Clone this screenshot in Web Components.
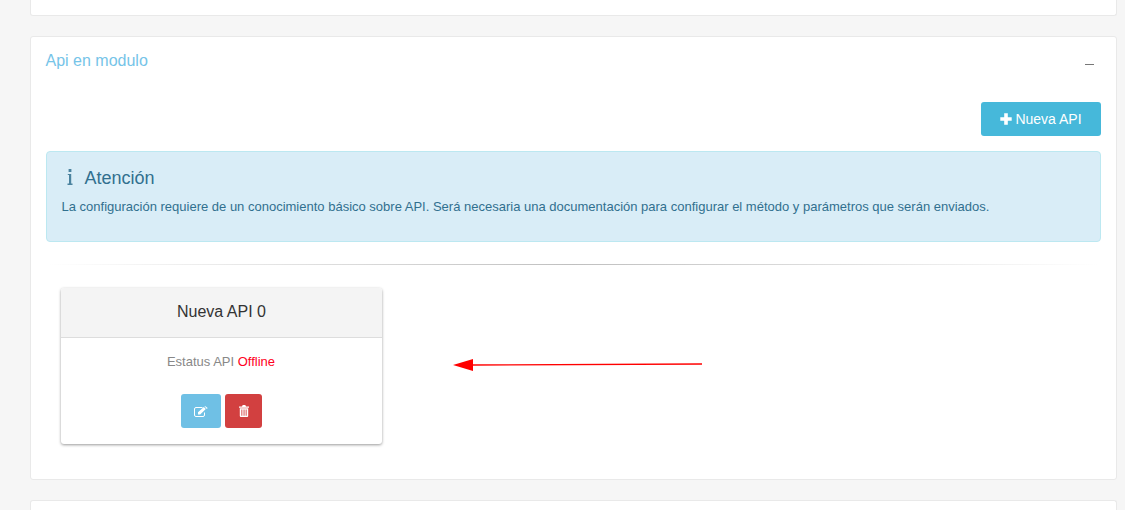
<!DOCTYPE html>
<html>
<head>
<meta charset="utf-8">
<title>Api en modulo</title>
<style>
html, body { margin: 0; height: 510px; overflow: hidden; }
body { background: #f6f6f6; font-family: "Liberation Sans", Arial, sans-serif; color: #333; }
#page { position: relative; display: flex; flex-direction: column; gap: 20px; padding: 0 8px 0 30px; height: 510px; box-sizing: border-box; overflow: hidden; }
#arrow { position: absolute; left: 450px; top: 355px; }
</style>
</head>
<body>
<div id="page">
  <app-panel stub="top"></app-panel>
  <app-panel title="Api en modulo">
    <app-toolbar>
      <app-button color="#46b8da" w="120" h="34" size="14"><app-icon name="plus" w="12" h="12"></app-icon>Nueva API</app-button>
    </app-toolbar>
    <app-alert heading="Atención">La configuración requiere de un conocimiento básico sobre API. Será necesaria una documentación para configurar el método y parámetros que serán enviados.</app-alert>
    <app-divider></app-divider>
    <api-card name="Nueva API 0" status="Offline"></api-card>
  </app-panel>
  <app-panel stub="bottom"></app-panel>
  <svg id="arrow" width="260" height="20" viewBox="0 0 260 20" aria-hidden="true">
    <line x1="22" y1="10" x2="252" y2="9" stroke="#ff0000" stroke-width="1.4"></line>
    <polygon points="3,10 23,4 23,16" fill="#ff0000"></polygon>
  </svg>
</div>

<script>
const ICONS = {
  plus: ['0 0 12 12', '<path d="M4.200 .3h3.600v3.900h3.900v3.600H7.800v3.900H4.200V7.800H.3V4.200h3.900z" fill="currentColor"/>'],
  edit: ['0 0 14 11', '<path d="M10.500 6.500v2.500a1.500 1.500 0 0 1-1.500 1.500H2A1.500 1.500 0 0 1 .5 9V3A1.500 1.500 0 0 1 2 1.500h6.500" fill="none" stroke="currentColor"/><path d="M4 8.500V6.300L9.800 .9l2 2L6.200 8.500zM10.500 .3l.5-.3 2.700 2-.9 .9z" fill="currentColor"/>'],
  trash: ['0 0 10 12', '<path d="M3 1.500 3.700 0h2.600L7 1.500h3V2.700H0V1.500z" fill="currentColor"/><path d="M.8 3.200h8.400V11a1 1 0 0 1-1 1H1.800a1 1 0 0 1-1-1zM2.400 4.500v6.200h.9V4.500zm2.200 0v6.200h.9V4.500zm2.100 0v6.200h.9V4.500z" fill="currentColor" fill-rule="evenodd"/>'],
  info: ['0 0 6 16', '<path d="M1.600 0h2.800v3H1.600zM.8 5h3.400v9.500H5.500V16H.5V14.500H2V6H.8z" fill="currentColor" opacity=".85"/>']
};

customElements.define('app-icon', class AppIcon extends HTMLElement {
  connectedCallback() {
    const [box, body] = ICONS[this.getAttribute('name')];
    this.attachShadow({ mode: 'open' }).innerHTML = `
      <style>
        :host { display: inline-flex; flex: none; }
        svg { display: block; }
      </style>
      <svg width="${this.getAttribute('w')}" height="${this.getAttribute('h')}" viewBox="${box}">${body}</svg>`;
  }
});

customElements.define('app-panel', class AppPanel extends HTMLElement {
  connectedCallback() {
    const stub = this.getAttribute('stub');
    const title = this.getAttribute('title');
    this.removeAttribute('title');
    this.attachShadow({ mode: 'open' }).innerHTML = `
      <style>
        :host { display: block; flex: none; box-sizing: border-box; background: #fff; border: 1px solid #e9e9e9; border-radius: 3px; }
        :host([stub="top"]) { height: 16px; border-top: 0; border-radius: 0 0 3px 3px; }
        :host([stub="bottom"]) { height: 10px; border-bottom: 0; border-radius: 3px 3px 0 0; }
        :host(:not([stub])) { height: 444px; }
        .head { display: flex; justify-content: space-between; padding: 15px 22px 0 14.500px; height: 49px; box-sizing: border-box; }
        h3 { margin: 0; font-size: 16px; font-weight: 400; line-height: 18px; color: #76c4e8; }
        .min { width: 9px; height: 1px; margin-top: 12px; background: #777; }
        .body { padding: 16px 15px 0; }
      </style>
      ${stub ? '' : `
      <div class="head"><h3>${title}</h3><div class="min"></div></div>
      <div class="body"><slot></slot></div>`}`;
  }
});

customElements.define('app-toolbar', class AppToolbar extends HTMLElement {
  constructor() {
    super();
    this.attachShadow({ mode: 'open' }).innerHTML = `
      <style>:host { display: flex; justify-content: flex-end; margin-bottom: 15px; }</style>
      <slot></slot>`;
  }
});

customElements.define('app-button', class AppButton extends HTMLElement {
  connectedCallback() {
    const a = n => this.getAttribute(n);
    this.attachShadow({ mode: 'open' }).innerHTML = `
      <style>
        :host { display: inline-flex; align-items: center; justify-content: center; gap: 3px; box-sizing: border-box;
          width: ${a('w')}px; height: ${a('h')}px; background: ${a('color')}; color: #fff; border-radius: 3px;
          font-size: ${a('size')}px; white-space: pre; }
      </style>
      <slot></slot>`;
  }
});

customElements.define('app-alert', class AppAlert extends HTMLElement {
  connectedCallback() {
    const heading = this.getAttribute('heading');
    this.attachShadow({ mode: 'open' }).innerHTML = `
      <style>
        :host { display: block; box-sizing: border-box; height: 91px; padding: 16px 15px 0 14.500px; background: #d9edf7;
          border: 1px solid #bce8f1; border-radius: 4px; color: #31708f; }
        h4 { display: flex; align-items: center; gap: 12px; margin: 0 0 10px 5px; font-size: 18px; font-weight: 400; line-height: 20px; }
        app-icon { margin-top: -2px; }
        p { margin: 0; font-size: 13px; line-height: 18px; }
      </style>
      <h4><app-icon name="info" w="6" h="16"></app-icon>${heading}</h4>
      <p><slot></slot></p>`;
  }
});

customElements.define('app-divider', class AppDivider extends HTMLElement {
  constructor() {
    super();
    this.attachShadow({ mode: 'open' }).innerHTML = `
      <style>
        :host { display: block; height: 1px; margin: 22px 0 23px;
          background: linear-gradient(to right, rgba(0,0,0,0), rgba(0,0,0,.25), rgba(0,0,0,0)); }
      </style>`;
  }
});

customElements.define('api-card', class ApiCard extends HTMLElement {
  connectedCallback() {
    const name = this.getAttribute('name');
    const status = this.getAttribute('status');
    this.attachShadow({ mode: 'open' }).innerHTML = `
      <style>
        :host { display: block; box-sizing: border-box; width: 321px; height: 156px; margin-left: 15px; background: #fff;
          border-radius: 3px; box-shadow: 0 1px 3px rgba(0,0,0,.4); overflow: hidden; }
        .head { height: 50px; box-sizing: border-box; padding-bottom: 2px; border-bottom: 1px solid #ddd; background: #f4f4f4;
          display: flex; align-items: center; justify-content: center; font-size: 16px; color: #333; }
        .status { margin: 15px 1px 0 0; font-size: 13px; line-height: 18px; text-align: center; color: #888; }
        .status b { font-weight: 400; color: #ff0022; }
        .actions { display: flex; justify-content: center; gap: 4px; margin-top: 23px; }
      </style>
      <div class="head">${name}</div>
      <p class="status">Estatus API <b>${status}</b></p>
      <div class="actions">
        <app-button color="#6fc0e5" w="40" h="34" size="13"><app-icon name="edit" w="14" h="11"></app-icon></app-button>
        <app-button color="#d24040" w="37" h="34" size="13"><app-icon name="trash" w="10" h="12"></app-icon></app-button>
      </div>`;
  }
});
</script>
</body>
</html>
